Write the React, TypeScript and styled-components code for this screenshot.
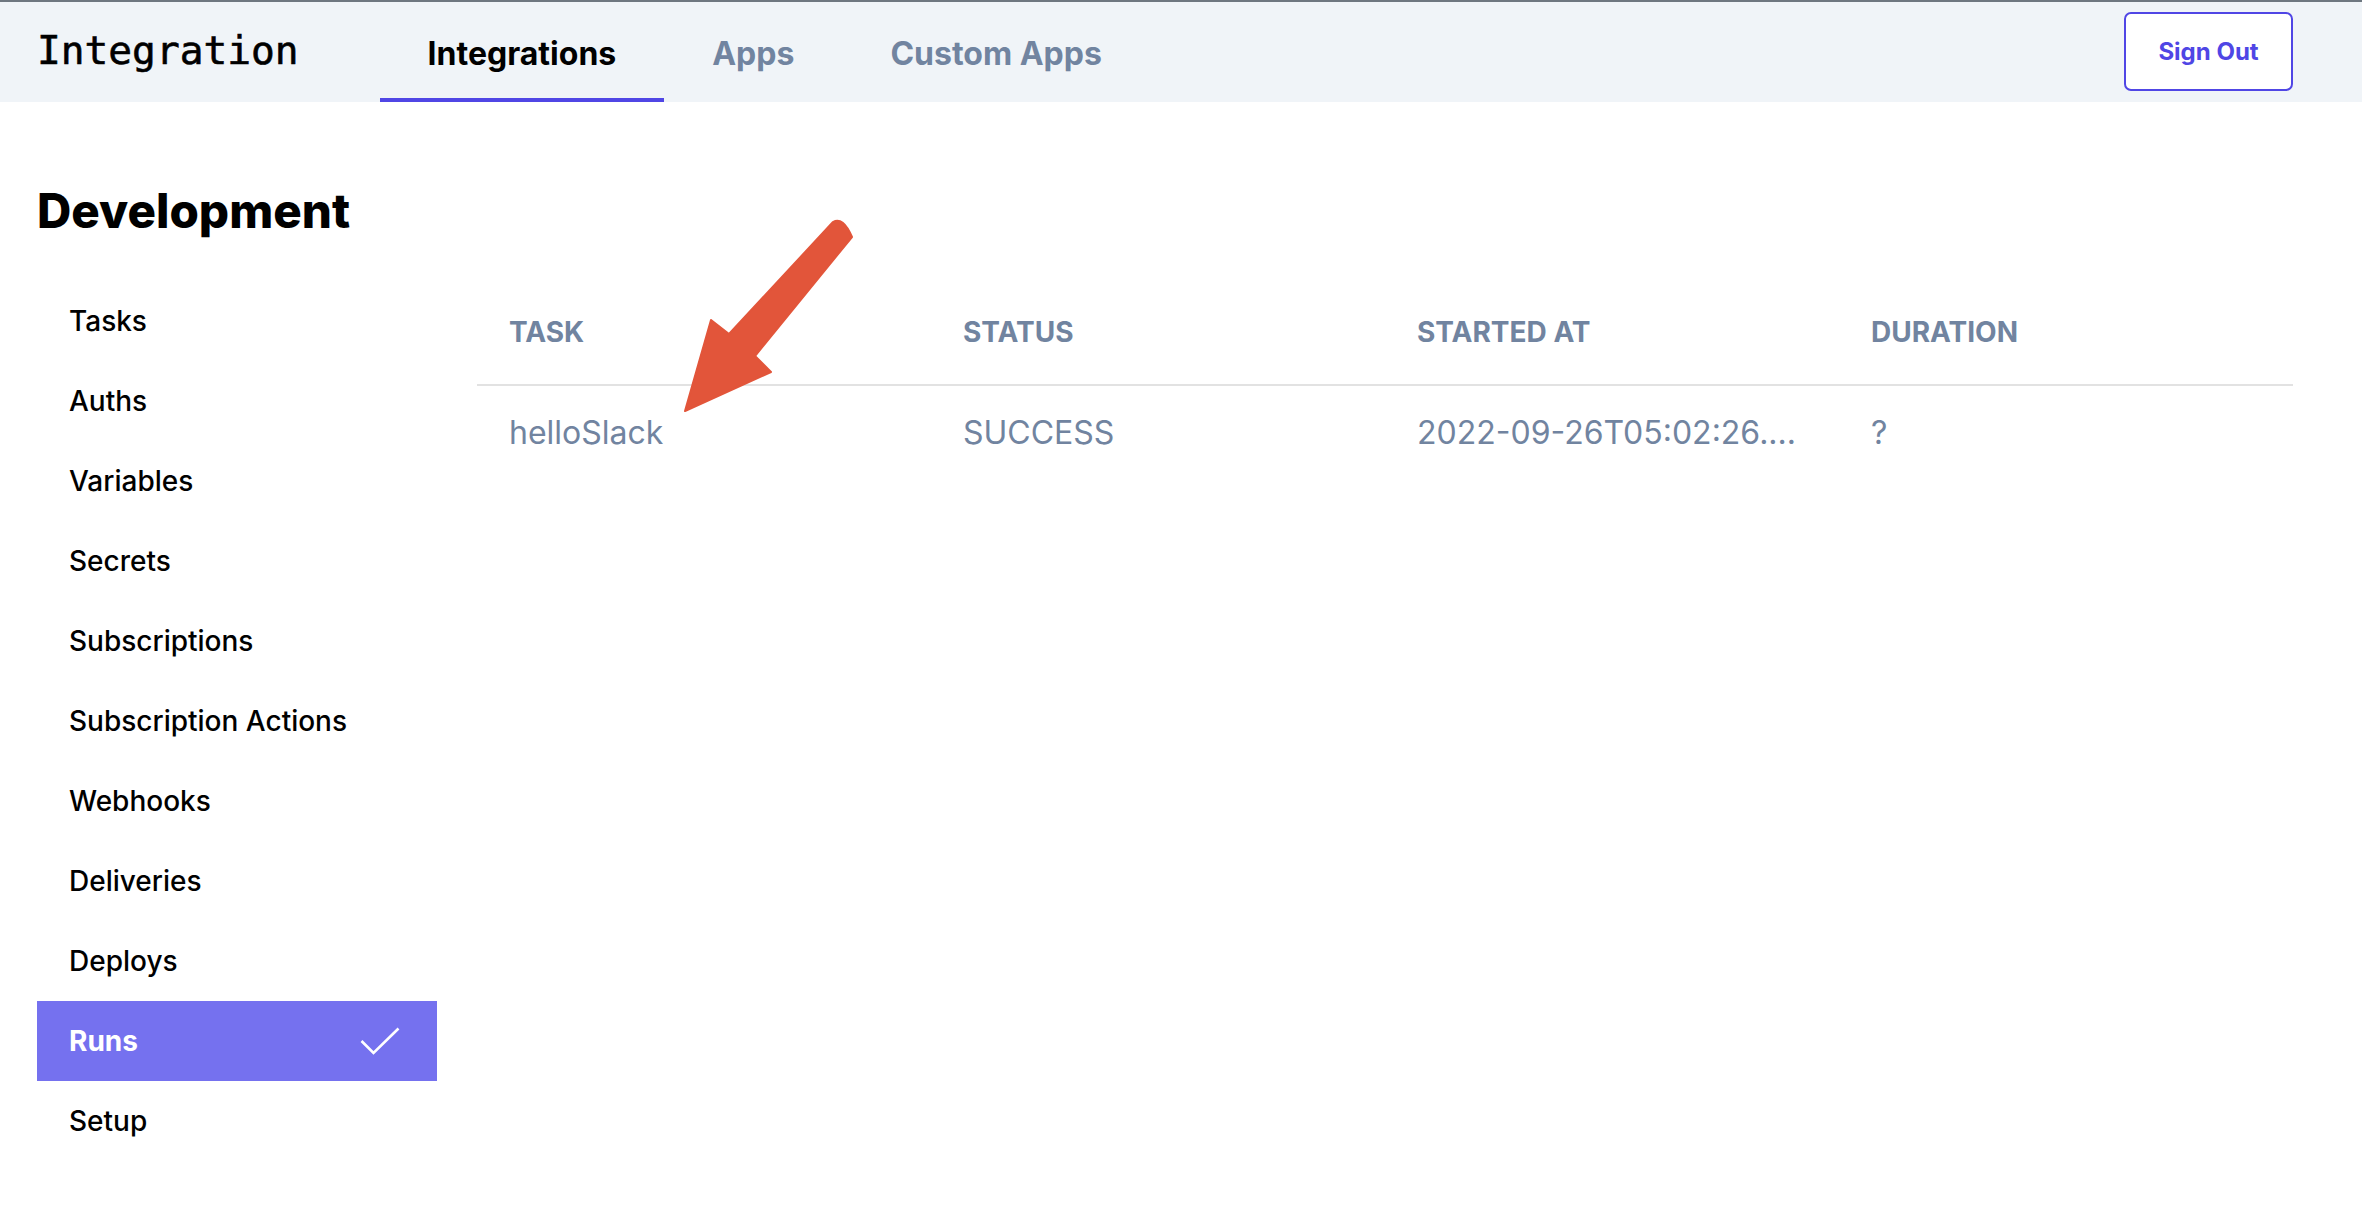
import React from "react";
import styled, { createGlobalStyle } from "styled-components";

const Global = createGlobalStyle`
  html, body { margin: 0; padding: 0; background: #ffffff; }
  body { font-family: Inter, "Noto Sans", sans-serif; color: #000; }
  * { box-sizing: border-box; }
`;

const Page = styled.div`
  position: relative;
  width: 2362px;
  min-height: 1220px;
  background: #fff;
`;

const TopBar = styled.header`
  display: flex;
  align-items: stretch;
  height: 102px;
  background: #f0f4f8;
  border-top: 2px solid #6e7780;
  padding: 0 69px 0 37px;
`;

const Logo = styled.div`
  display: flex;
  align-items: center;
  font-family: "DejaVu Sans Mono", "Liberation Mono", monospace;
  font-size: 39.5px;
  color: #000;
  -webkit-text-stroke: 0.6px #000;
  padding-bottom: 4px;
  margin-right: 81px;
`;

const Tabs = styled.nav`
  display: flex;
  align-items: stretch;
  flex: 1;
`;

const Tab = styled.div<{ $active?: boolean }>`
  display: flex;
  align-items: center;
  padding: 7px 48px 0;
  font-size: 32px;
  font-weight: 700;
  color: ${(p) => (p.$active ? "#000" : "#7184a0")};
  border-bottom: 4px solid ${(p) => (p.$active ? "#5046e5" : "transparent")};
`;

const SignOut = styled.button`
  align-self: flex-start;
  margin-top: 10px;
  width: 169px;
  height: 79px;
  background: #fff;
  border: 2px solid #5046e5;
  border-radius: 7px;
  color: #4f46e5;
  font-family: Inter, sans-serif;
  font-size: 24px;
  font-weight: 700;
  cursor: pointer;
`;

const Main = styled.main`
  padding: 82px 69px 0 37px;
`;

const Heading = styled.h1`
  margin: 0 0 43px 0;
  font-size: 47.5px;
  font-weight: 800;
  line-height: 54px;
  color: #000;
`;

const Body = styled.div`
  display: flex;
  gap: 40px;
  align-items: flex-start;
`;

const Sidebar = styled.ul`
  list-style: none;
  margin: 0;
  padding: 0;
  width: 400px;
  flex: none;
`;

const NavItem = styled.li<{ $active?: boolean }>`
  display: flex;
  align-items: center;
  justify-content: space-between;
  height: 80px;
  padding: 0 37px 0 32px;
  font-size: 28px;
  font-weight: ${(p) => (p.$active ? 700 : 500)};
  color: ${(p) => (p.$active ? "#fff" : "#000")};
  background: ${(p) => (p.$active ? "#7571ef" : "transparent")};
`;

const Content = styled.section`
  flex: 1;
  margin-top: -1px;
`;

const Table = styled.table`
  width: 100%;
  border-collapse: collapse;
  table-layout: fixed;
`;

const Th = styled.th`
  height: 105px;
  padding: 0 32px;
  text-align: left;
  font-size: 28px;
  font-weight: 700;
  text-transform: uppercase;
  color: #7184a0;
  border-bottom: 2px solid #e2e2e2;
`;

const Td = styled.td`
  height: 94px;
  padding: 0 32px;
  font-size: 32px;
  font-weight: 400;
  color: #7184a0;
  white-space: nowrap;
  overflow: hidden;
`;

const ArrowLayer = styled.svg`
  position: absolute;
  left: 670px;
  top: 210px;
  pointer-events: none;
`;

const items = [
  "Tasks",
  "Auths",
  "Variables",
  "Secrets",
  "Subscriptions",
  "Subscription Actions",
  "Webhooks",
  "Deliveries",
  "Deploys",
  "Runs",
  "Setup",
];

export default function App() {
  return (
    <Page>
      <Global />
      <TopBar>
        <Logo>Integration</Logo>
        <Tabs>
          <Tab $active>Integrations</Tab>
          <Tab>Apps</Tab>
          <Tab>Custom Apps</Tab>
        </Tabs>
        <SignOut>Sign Out</SignOut>
      </TopBar>
      <Main>
        <Heading>Development</Heading>
        <Body>
          <Sidebar>
            {items.map((it) => (
              <NavItem key={it} $active={it === "Runs"}>
                <span>{it}</span>
                {it === "Runs" && (
                  <svg width="40" height="28" viewBox="0 0 40 28">
                    <polyline
                      points="1.5,14 13.5,26 38.5,1.5"
                      fill="none"
                      stroke="#fff"
                      strokeWidth="2.6"
                    />
                  </svg>
                )}
              </NavItem>
            ))}
          </Sidebar>
          <Content>
            <Table>
              <thead>
                <tr>
                  <Th>Task</Th>
                  <Th>Status</Th>
                  <Th>Started At</Th>
                  <Th>Duration</Th>
                </tr>
              </thead>
              <tbody>
                <tr>
                  <Td>helloSlack</Td>
                  <Td>SUCCESS</Td>
                  <Td>2022-09-26T05:02:26....</Td>
                  <Td>?</Td>
                </tr>
              </tbody>
            </Table>
          </Content>
        </Body>
      </Main>
      <ArrowLayer width="200" height="215" viewBox="670 210 200 215">
        <path
          d="M833 222 Q843 216 852 237 L755 356 L771 372 L685 411 L711 320 L729 334 Z"
          fill="#e2553a"
          stroke="#e2553a"
          strokeWidth="2"
          strokeLinejoin="round"
        />
      </ArrowLayer>
    </Page>
  );
}
